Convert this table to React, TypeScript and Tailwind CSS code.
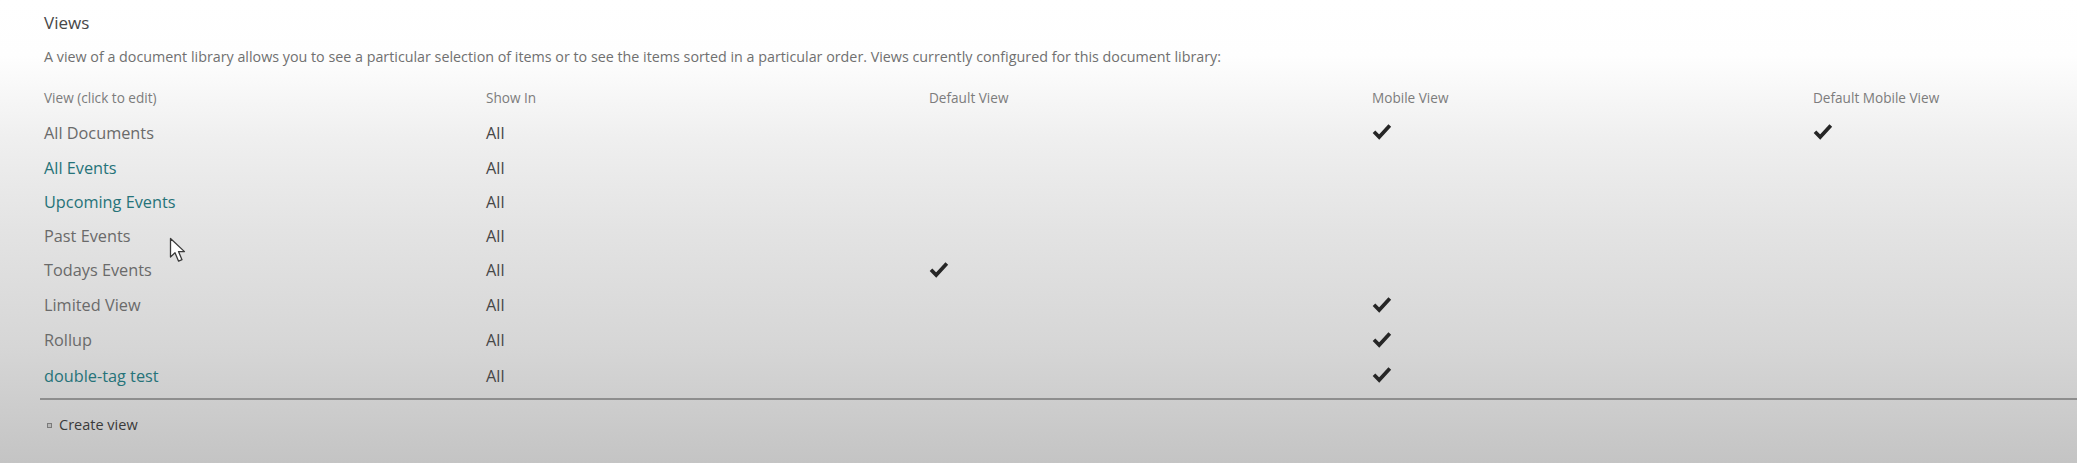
import React from "react";

type ViewRow = {
	name: string;
	link: boolean;
	defaultView: boolean;
	mobile: boolean;
	defaultMobile: boolean;
	h: string;
};

const rows: ViewRow[] = [
	{ name: "All Documents", link: false, defaultView: false, mobile: true, defaultMobile: true, h: "h-[36px]" },
	{ name: "All Events", link: true, defaultView: false, mobile: false, defaultMobile: false, h: "h-[34px]" },
	{ name: "Upcoming Events", link: true, defaultView: false, mobile: false, defaultMobile: false, h: "h-[34px]" },
	{ name: "Past Events", link: false, defaultView: false, mobile: false, defaultMobile: false, h: "h-[34px]" },
	{ name: "Todays Events", link: false, defaultView: true, mobile: false, defaultMobile: false, h: "h-[35px]" },
	{ name: "Limited View", link: false, defaultView: false, mobile: true, defaultMobile: false, h: "h-[35px]" },
	{ name: "Rollup", link: false, defaultView: false, mobile: true, defaultMobile: false, h: "h-[35px]" },
	{ name: "double-tag test", link: true, defaultView: false, mobile: true, defaultMobile: false, h: "h-[36px]" },
];

const Check = () => (
	<svg width="20" height="17" viewBox="0 0 20 17" aria-hidden="true" className="-mt-[3px]">
		<path d="M2 8.8 L7.2 14 L17.8 2.6" fill="none" stroke="#262626" strokeWidth="3.7" strokeLinejoin="miter" />
	</svg>
);

const Cursor = () => (
	<svg width="18" height="27" viewBox="0 0 18 27" className="absolute left-[169px] top-[237px]" aria-hidden="true">
		<path
			d="M1.5 1.5 L1.5 20 L6 15.8 L9.6 24.2 L13 22.7 L9.5 14.6 L15.5 14.6 Z"
			fill="#ffffff"
			stroke="#3a3a3a"
			strokeWidth="1.3"
			strokeLinejoin="round"
		/>
	</svg>
);

const cols = "grid grid-cols-[442px_443px_443px_441px_1fr] items-center";

export default function App() {
	return (
		<div
			className="relative h-[463px] w-full overflow-hidden bg-[linear-gradient(to_bottom,#ffffff_0%,#fefefe_12%,#efefef_30%,#e3e3e3_50%,#d6d6d6_75%,#c4c4c4_100%)]"
			style={{ fontFamily: '"Open Sans", "Noto Sans", sans-serif' }}
		>
			<div className="pl-[40px] pt-[11px]">
				<div className="pl-[4px]">
					<h2 className="h-[24px] text-[17px] leading-[24px] text-[#474747]">Views</h2>
					<p className="mt-[12px] h-[20px] text-[14.3px] leading-[20px] text-[#707070]">
						A view of a document library allows you to see a particular selection of items or to see the items sorted in a
						particular order. Views currently configured for this document library:
					</p>

					<div className="mt-[14px]">
						<div className={`${cols} h-[34px] text-[13.6px] text-[#7c7c7c]`}>
							<span>View (click to edit)</span>
							<span>Show In</span>
							<span>Default View</span>
							<span>Mobile View</span>
							<span>Default Mobile View</span>
						</div>
						{rows.map((r) => (
							<div key={r.name} className={`${cols} ${r.h} text-[16.3px]`}>
								<a href="#" className={r.link ? "text-[#267379]" : "text-[#6a6a6a]"}>
									{r.name}
								</a>
								<span className="text-[#474747]">All</span>
								<span>{r.defaultView && <Check />}</span>
								<span>{r.mobile && <Check />}</span>
								<span>{r.defaultMobile && <Check />}</span>
							</div>
						))}
					</div>
				</div>

				<div className="mt-[4px] h-[2px] bg-[#8e8e8e]" />

				<div className="flex h-[50px] items-center pl-[7px]">
					<span className="mr-[7px] h-[5px] w-[5px] border border-[#7a7a7a] bg-[#b8b8b8]" />
					<a href="#" className="text-[14.5px] text-[#3a3a3a]">
						Create view
					</a>
				</div>
			</div>
			<Cursor />
		</div>
	);
}
